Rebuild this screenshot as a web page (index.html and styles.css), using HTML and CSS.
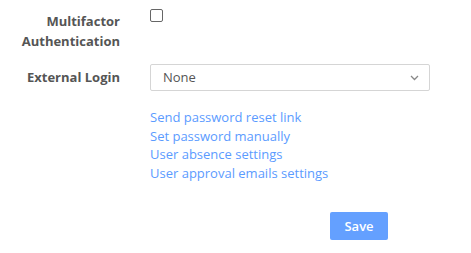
FILE: index.html
```html
<!DOCTYPE html>
<html>
<head>
<meta charset="utf-8">
<link rel="stylesheet" href="styles.css">
</head>
<body>
<form class="form">
  <div class="row row-mfa">
    <label class="label">Multifactor<br>Authentication</label>
    <div class="field"><span class="checkbox"></span></div>
  </div>
  <div class="row row-ext">
    <label class="label">External Login</label>
    <div class="field">
      <div class="select">
        <span>None</span>
        <svg class="chev" width="9" height="6" viewBox="0 0 9 6"><path d="M1 1l3.5 3.5L8 1" fill="none" stroke="#888" stroke-width="1.3"/></svg>
      </div>
    </div>
  </div>
  <div class="row row-links">
    <div class="label"></div>
    <div class="links">
      <a href="#">Send password reset link</a>
      <a href="#">Set password manually</a>
      <a href="#">User absence settings</a>
      <a href="#">User approval emails settings</a>
    </div>
  </div>
  <div class="actions">
    <button type="button" class="btn">Save</button>
  </div>
</form>
</body>
</html>
```
FILE: styles.css
```css
html, body { margin: 0; padding: 0; background: #fff; }
body { font-family: "Open Sans", "Liberation Sans", sans-serif; font-size: 13px; line-height: 1.43; color: #333; }
.form { width: 434px; padding-top: 11px; }
.row { display: grid; grid-template-columns: 120px 280px; column-gap: 30px; }
.label { text-align: right; font-weight: 700; color: #555; }
.row-mfa .label { line-height: 20px; }
.checkbox { display: block; width: 11px; height: 11px; border: 1px solid #666; border-radius: 2px; margin-top: -2px; }
.row-ext { margin-top: 13px; align-items: center; }
.select { box-sizing: border-box; height: 27px; border: 1px solid #d5d5d5; border-radius: 2px; display: flex; align-items: center; justify-content: space-between; padding: 0 10px 0 12px; color: #555; }
.chev { display: block; }
.row-links { margin-top: 17px; }
.links { display: flex; flex-direction: column; }
.links a { color: #5b9bff; text-decoration: none; line-height: 18.6px; }
.actions { display: flex; justify-content: flex-start; padding-left: 330px; margin-top: 30px; }
.btn { width: 58px; height: 28px; border: none; border-radius: 2px; background: #64a0ff; color: #fff; font-family: inherit; font-size: 13px; font-weight: 600; padding: 0; }
```
